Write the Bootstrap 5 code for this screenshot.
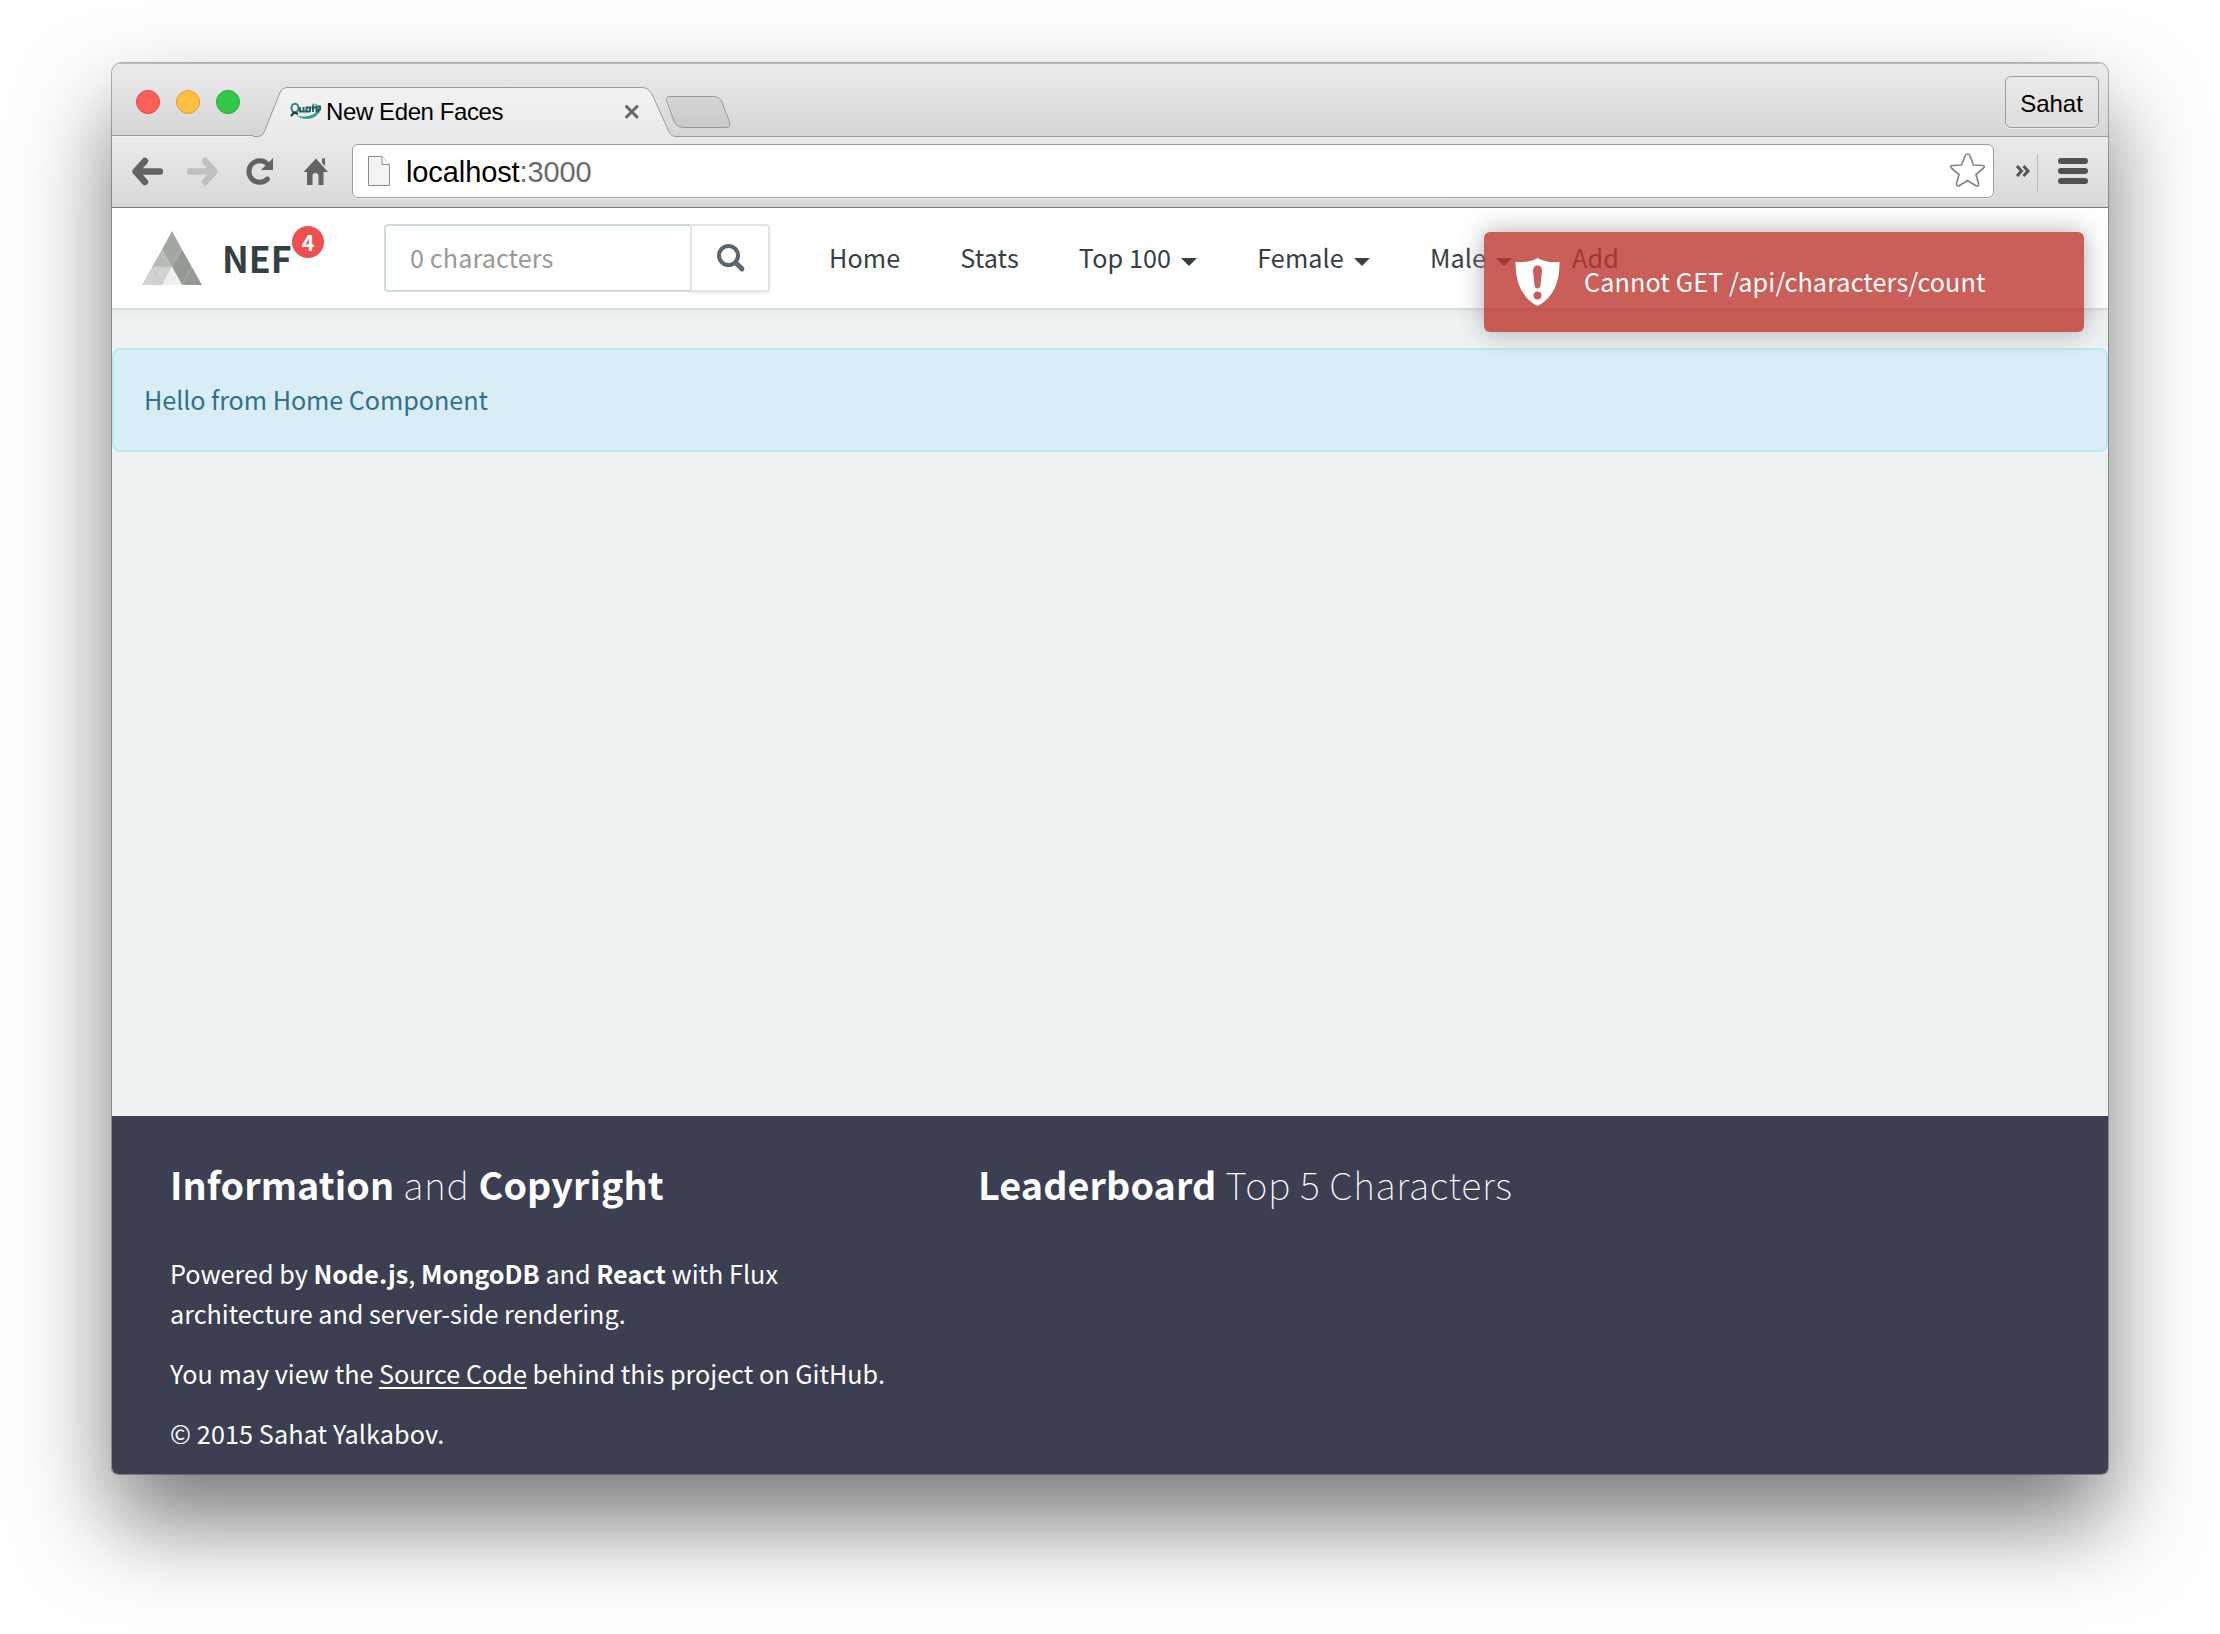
<!DOCTYPE html>
<html lang="en">
<head>
<meta charset="utf-8">
<meta name="viewport" content="width=device-width, initial-scale=1">
<title>New Eden Faces</title>
<link href="https://cdn.jsdelivr.net/npm/bootstrap@5.3.0/dist/css/bootstrap.min.css" rel="stylesheet">
<style>
  body { background: #fff; width: 2220px; height: 1634px; padding: 63px 112px 0; overflow: hidden; font-family: "Noto Sans CJK SC", "Noto Sans", sans-serif; font-size: 25.2px; line-height: 40px; color: #353f44; }
  .window { width: 1996px; height: 1411px; border-radius: 10px 10px 6px 6px; box-shadow: 0 0 0 1px rgba(0,0,0,.28), 0 48px 92px rgba(0,0,0,.53); }
  .window-clip { border-radius: 10px 10px 6px 6px; }
  .chrome { font-family: "Liberation Sans", sans-serif; color: #000; }
  .tabstrip { height: 74px; background: linear-gradient(#ebebeb, #d5d5d5); border-top: 1px solid #bdbdbd; }
  .tab-shape { left: 140px; top: 0; }
  .lights { padding-left: 24px; gap: 16px; width: 176px; height: 76px; }
  .light { width: 24px; height: 24px; border-radius: 50%; border: 1px solid; }
  .light-close { background: #fc605b; border-color: #df4744; }
  .light-min { background: #fdbf41; border-color: #dd9e33; }
  .light-max { background: #34c84a; border-color: #27a934; }
  .tab-content-row { padding-top: 23px; }
  .tab-label { font-size: 24px; letter-spacing: -.4px; line-height: 30px; margin-left: 4px; width: 177px; white-space: nowrap; }
  .tab-close { margin-left: 121px; }
  .profile { width: 94px; height: 52px; margin: 12px 9px 0 0; padding-right: 1px; border: 1px solid #9c9c9c; border-radius: 6px; font-size: 24px; line-height: 53px; background: linear-gradient(#e9e9e9,#dedede); box-shadow: 0 1px 0 #eee; }
  .toolbar { height: 71px; background: linear-gradient(#eaeaea, #d9d9d9); border-bottom: 1px solid #7c7c7c; }
  .omnibox { width: 1642px; height: 54px; margin: 7px 0 0 240px; border: 1px solid #9c9c9c; border-radius: 6px; background: #fff; font-size: 29px; letter-spacing: -.1px; line-height: 54px; box-shadow: 0 1px 1px #eee; }
  .omnibox .page-icon { margin-right: -40px; }
  .omnibox .url { margin-left: 53px; }
  .omnibox .port { color: #6a6a6a; }
  .site-nav { height: 102px; background: #fff; border-bottom: 2px solid #d9dcde; box-shadow: 0 2px 8px rgba(0,0,0,.06); z-index: 1; }
  .brand { font-size: 35.8px; font-weight: 700; width: 242px; padding-left: 30px; }
  .brand svg { margin-top: 23px; }
  .brand-name { margin-left: 20px; line-height: 98px; }
  .count { left: 180px; top: 18px; width: 32px; height: 32px; border-radius: 50%; background: #f04f4f; font-size: 21.5px; line-height: 31px; font-weight: 700; }
  .search { width: 386px; height: 68px; margin: 16px 0 0 30px; }
  .search .form-control { border: 2px solid #cddcdc; border-right-width: 0; border-radius: 4px 0 0 4px; padding: 0 0 2px 24px; font-size: 25.2px; letter-spacing: .1px; color: #999; height: 68px; line-height: 62px; box-shadow: none; }
  .search .form-control::placeholder { color: #999; opacity: 1; }
  .search .btn { width: 80px; border: 2px solid #dfe6e7; border-radius: 0 4px 4px 0; background: #fff; box-shadow: 0 2px 2px rgba(0,0,0,.05); padding: 0 0 5px 1px; line-height: 40px; }
  .menu { margin-left: 29px; letter-spacing: .1px; }
  .menu .nav-link { padding: 0 30px; line-height: 98px; color: #353f44; }
  .menu .arrow { display: inline-block; margin-left: 10px; border: 8px solid transparent; border-top-color: #353f44; border-bottom: 0; vertical-align: 2px; }
  .page { background: #eef2f3; }
  .hello { margin: 38px 0 0; height: 104px; padding: 0 30px; line-height: 98px; letter-spacing: -.07px; background: #d9edf7; border: 2px solid #bce8f1; border-radius: 8px; color: #31708f; }
  .toast-error { left: 1372px; top: 24px; width: 600px; height: 100px; border-radius: 6px; background: #bd362f; opacity: .8; box-shadow: 0 0 24px #999; z-index: 5; color: #fff; padding-left: 31px; }
  .toast-error svg { margin-top: 26px; }
  .toast-error .msg { margin-left: 24px; line-height: 98px; letter-spacing: .11px; }
  .foot { height: 358px; background: #3c3e51; color: #fff; padding: 40px 58px 0; }
  .foot h3 { font-size: 37.7px; line-height: 56px; font-weight: 100; margin: 0 0 41px; white-space: nowrap; letter-spacing: .65px; }
  .foot h3 strong { letter-spacing: .1px; }
  .foot h3 strong, .foot p strong { font-weight: 700; }
  .foot p { margin: 0 0 20px; white-space: nowrap; }
  .foot .legal { letter-spacing: .1px; }
  .foot .info { width: 808px; }
  .foot a { color: #fff; text-decoration: underline; text-decoration-thickness: 2px; text-underline-offset: 3px; }
</style>
</head>
<body>
<div class="window">
<div class="window-clip d-flex flex-column h-100 overflow-hidden">
  <div class="chrome">
    <div class="tabstrip position-relative d-flex">
      <svg class="tab-shape position-absolute" width="1856" height="75" viewBox="0 0 1856 75">
        <defs>
          <linearGradient id="tg" x2="0" y2="1"><stop stop-color="#f2f2f2"/><stop offset="1" stop-color="#eaeaea"/></linearGradient>
          <linearGradient id="ng" x2="0" y2="1"><stop stop-color="#d6d6d6"/><stop offset="1" stop-color="#c9c9cb"/></linearGradient>
        </defs>
        <path d="M0 72.500H4C10 72.500 11 71 13 66L27 31C29.500 25 31 23.500 37 23.500H389C395 23.500 398 26 401 32L416 66C418.500 71 420 72.500 425 72.500H1856V75H0Z" fill="url(#tg)"/>
        <path d="M0 72.500H4C10 72.500 11 71 13 66L27 31C29.500 25 31 23.500 37 23.500H389C395 23.500 398 26 401 32L416 66C418.500 71 420 72.500 425 72.500H1856" fill="none" stroke="#999"/>
        <path d="M418 32.500H459C466 32.500 468 34 470 38L477.500 58C478.500 62 477 63.500 474 63.500H432C427 63.500 424 61 422 57L415 38C413.500 34 415 32.500 418 32.500Z" fill="url(#ng)" stroke="#989898"/>
      </svg>
      <svg class="position-absolute start-0 bottom-0" width="141" height="2"><path d="M0 .5H141" stroke="#999"/><path d="M0 1.500H141" stroke="#f0f0f0"/></svg>
      <div class="lights d-flex align-items-center position-relative">
        <span class="light light-close"></span>
        <span class="light light-min"></span>
        <span class="light light-max"></span>
      </div>
      <div class="tab-content-row d-flex align-items-center position-relative">
        <svg width="34" height="20" viewBox="0 0 34 20" style="margin-top:-2px"><path d="M8 14C15 17 25 16 32 8C31 17 17 22 8 14Z" fill="#2f9d93"/><ellipse cx="7" cy="7" rx="3.500" ry="4.300" fill="none" stroke="#27897f" stroke-width="2"/><path d="M3 15L6 11.500L10 13" stroke="#173f3c" stroke-width="2.200" fill="none"/><path d="M12 6V10.500H15.500V6M15.500 10.500H17.500M22 11V6.500H18.500V10.500H22M25 11V3.500M23.500 6.500H27.500M28.500 8.500H32V5.500H28.500V10.500H31.500" fill="none" stroke="#285f5b" stroke-width="1.900"/><path d="M24 3.500H29" stroke="#51c9b8" stroke-width="1.600"/></svg>
        <span class="tab-label">New Eden Faces</span>
        <svg class="tab-close" width="16" height="16" viewBox="0 0 16 16"><path d="M2.500 2.500L13 13M13 2.500L2.500 13" stroke="#666" stroke-width="3" stroke-linecap="round"/></svg>
      </div>
      <div class="profile ms-auto text-center position-relative">Sahat</div>
    </div>
    <div class="toolbar position-relative d-flex">
      <svg class="position-absolute start-0 top-0" width="240" height="70" viewBox="0 0 240 70">
        <g fill="none" stroke="#636363" stroke-width="6.400" stroke-linecap="round" stroke-linejoin="round">
          <path d="M33 24L23.500 34.500L33 45M25 34.500H48"/>
          <path d="M93 24L102.500 34.500L93 45M101 34.500H78" stroke="#c0c0c0"/>
          <path d="M155 26.500A10.800 10.800 0 1 0 155.500 42" stroke-width="5"/>
        </g>
        <path d="M161 21V33H149Z" fill="#636363"/>
        <path d="M204 21.500L216 35H211.500V48H206.500V39Q206.500 36 203.500 36T200.500 39V48H195V35H191.500ZM210 21.500H213V29L210 26Z" fill="#636363"/>
      </svg>
      <div class="omnibox d-flex">
        <svg class="page-icon" width="40" height="52" viewBox="0 0 40 52"><path d="M15.500 11.500H29L36.500 19.500V40.500H15.500Z" fill="#f4f4f4" stroke="#8c8c8c"/><path d="M29 11.500V19.500H36.500" fill="#fff" stroke="#8c8c8c"/></svg>
        <span class="url">localhost<span class="port">:3000</span></span>
        <svg class="ms-auto" width="45" height="52" viewBox="0 0 45 52"><path d="M19.500 9Q17.500 9 17 11L13.500 20L4.500 20.500Q1 21 4 23.500L11 29.500L8.500 38.500Q8.500 42 11.500 40.500L19.500 35.500L27.500 40.500Q31 42 30.500 38.500L28 29.500L35 23.500Q38 21 34.500 20.500L25.500 20L22 11Q21.500 9 19.500 9Z" fill="#fff" stroke="#858585" stroke-width="1.700"/></svg>
      </div>
      <svg width="112" height="70" viewBox="0 0 112 70"><path d="M23 29L27.500 34L23 39M29.500 29L34 34L29.500 39" fill="none" stroke="#555" stroke-width="3"/><path d="M43.500 17V55" stroke="#b9b9b9"/><path d="M67 24H91M67 34H91M67 44H91" stroke="#515151" stroke-width="6" stroke-linecap="round"/></svg>
    </div>
  </div>

  <div class="page position-relative flex-grow-1 d-flex flex-column">
    <nav class="site-nav position-relative d-flex">
      <div class="brand d-flex position-relative">
        <svg width="60" height="54" viewBox="0 0 60 54">
          <path d="M30 0L40 18.500L30 36L20 18.500Z" fill="#a2a8a0"/><path d="M40 18.500L60 54H40L30 36Z" fill="#939a91"/><path d="M20 18.500L30 36H10Z" fill="#b7bbb6"/><path d="M10 36H30L20 54H0Z" fill="#d0d3cf"/><path d="M30 36L40 54H20Z" fill="#eee"/><path d="M40 54L50 36M20 54L10 36" stroke="#bfc3be" stroke-width=".6"/>
        </svg>
        <span class="brand-name">NEF</span>
        <span class="count position-absolute text-white text-center">4</span>
      </div>
      <form class="search input-group flex-nowrap">
        <input class="form-control" type="text" placeholder="0 characters">
        <button class="btn" type="button"><svg width="30" height="30" viewBox="0 0 30 30"><circle cx="12.500" cy="12.500" r="9.500" fill="none" stroke="#58666e" stroke-width="4"/><path d="M20 20L26 26" stroke="#58666e" stroke-width="4.800" stroke-linecap="round"/></svg></button>
      </form>
      <ul class="menu nav flex-nowrap">
        <li><a class="nav-link" href="#">Home</a></li>
        <li><a class="nav-link" href="#">Stats</a></li>
        <li><a class="nav-link" href="#">Top 100<span class="arrow"></span></a></li>
        <li><a class="nav-link" href="#">Female<span class="arrow"></span></a></li>
        <li><a class="nav-link" href="#">Male<span class="arrow"></span></a></li>
        <li><a class="nav-link" href="#">Add</a></li>
      </ul>
    </nav>
    <div class="toast-error position-absolute d-flex">
      <svg width="45" height="48" viewBox="0 0 45 48"><path d="M22.500 0Q30 5 44.500 4Q45 36 22.500 48Q0 36 .5 4Q15 5 22.500 0Z" fill="#fff"/><path d="M22.500 7.500Q27 7.500 27 13L25.500 27Q25 30.500 22.500 30.500T19.500 27L18 13Q18 7.500 22.500 7.500Z" fill="#bd362f"/><circle cx="22.500" cy="37.500" r="4" fill="#bd362f"/></svg>
      <span class="msg">Cannot GET /api/characters/count</span>
    </div>
    <div class="hello alert">Hello from Home Component</div>
    <footer class="foot d-flex mt-auto">
      <div class="info">
        <h3><strong>Information</strong> and <strong>Copyright</strong></h3>
        <p>Powered by <strong>Node.js</strong>, <strong>MongoDB</strong> and <strong>React</strong> with Flux<br>architecture and server-side rendering.</p>
        <p>You may view the <a href="#">Source Code</a> behind this project on GitHub.</p>
        <p class="legal">© 2015 Sahat Yalkabov.</p>
      </div>
      <div><h3><strong>Leaderboard</strong> Top 5 Characters</h3></div>
    </footer>
  </div>
</div>
</div>
<script src="https://cdn.jsdelivr.net/npm/bootstrap@5.3.0/dist/js/bootstrap.bundle.min.js"></script>
</body>
</html>
